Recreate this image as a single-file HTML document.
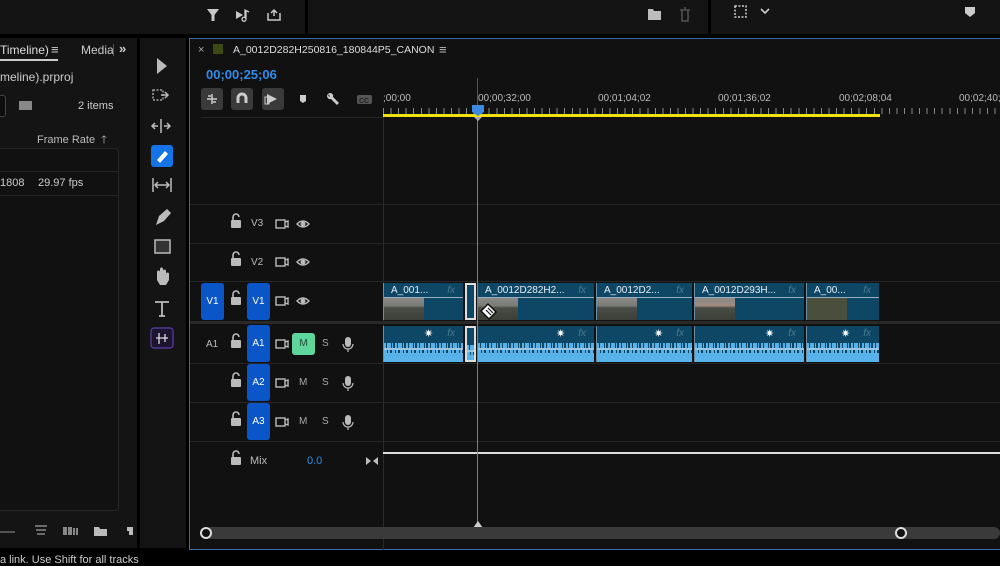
<!DOCTYPE html>
<html><head><meta charset="utf-8"><style>
*{margin:0;padding:0;box-sizing:border-box}
body{width:1000px;height:563px;background:#000;position:relative;overflow:hidden;font-family:"Liberation Sans",sans-serif;color:#c8c8c8;font-size:11px}
.a{position:absolute}
.t{position:absolute;white-space:nowrap}
.hl{position:absolute;height:1px;background:#262626}
.btn{position:absolute;width:22px;height:22px;background:#3a3a3a;border-radius:3px}
.tb{position:absolute;background:#0a55c8;border-radius:3px;color:#fff;font-size:10px;text-align:center}
.vc{position:absolute;top:283px;height:37px;background:#0e4766;border-left:1px solid #6d8fa5}
.vc .ti{position:absolute;left:7px;top:2px;color:#e8eef2;font-size:10px;white-space:nowrap}
.vc .fx{position:absolute;right:8px;top:2px;color:#4d7891;font-style:italic;font-size:10px}
.vc .ln{position:absolute;left:0;right:0;top:14px;height:1px;background:#9ab0bf}
.vc .th{position:absolute;left:0;top:15px;width:40px;height:22px;background:linear-gradient(#8a8a86 0,#7b7c78 35%,#4a4d45 45%,#3b3f37 100%)}
.ac{position:absolute;top:326px;height:36px;background:#0e4766;border-left:1px solid #6d8fa5;overflow:hidden}
.ac .w1{position:absolute;left:0;right:0;top:17px;height:5px;background:repeating-linear-gradient(90deg,#58b2ea 0 2px,#0e4766 2px 3px,#58b2ea 3px 7px,#0e4766 7px 8px,#58b2ea 8px 9px,#0e4766 9px 11px)}
.ac .w0{position:absolute;left:0;right:0;top:22px;height:2px;background:#9cc7e3}
.ac .w2{position:absolute;left:0;right:0;top:24px;height:12px;background:linear-gradient(#58b2ea,#58b2ea) 0 3px/100% 9px no-repeat,repeating-linear-gradient(90deg,#58b2ea 0 3px,#0e4766 3px 4px,#58b2ea 4px 6px,#0e4766 6px 8px)}
.ac .st{position:absolute;top:1px;color:#fff;font-size:11px}
.ac .fx{position:absolute;right:8px;top:2px;color:#4d7891;font-style:italic;font-size:10px}
</style></head><body>
<div class="a" style="left:0;top:0;width:305px;height:34px;background:#141414"></div>
<div class="a" style="left:308px;top:0;width:400px;height:34px;background:#141414"></div>
<div class="a" style="left:711px;top:0;width:289px;height:34px;background:#141414"></div>
<svg class="a" style="left:205px;top:7px" width="90" height="16"><path d="M2 2h12l-4.5 6v6h-3v-6z" fill="#c8c8c8"/><path d="M31 4l7 4-7 4z" fill="#c8c8c8"/><path d="M41 3v9a2 2 0 1 1-1-1.5V3l4 2" stroke="#c8c8c8" stroke-width="1.3" fill="none"/><path d="M63 6v7h12V6M69 9V3m-3 3l3-3 3 3" stroke="#c8c8c8" stroke-width="1.5" fill="none"/></svg>
<svg class="a" style="left:647px;top:6px" width="50" height="16"><path d="M1 3h5l1 2h7v9H1z" fill="#bdbdbd"/><path d="M33 4h10M35 5v10h6V5M37 2h2" stroke="#555" stroke-width="1.5" fill="none"/></svg>
<svg class="a" style="left:733px;top:4px" width="40" height="16"><rect x="2" y="2" width="11" height="11" fill="none" stroke="#ccc" stroke-width="1.5" stroke-dasharray="2 1.5"/><path d="M28 5l4 4 4-4" stroke="#ccc" stroke-width="1.6" fill="none"/></svg>
<svg class="a" style="left:964px;top:6px" width="12" height="12"><path d="M1 1h10v6l-5 4-5-4z" fill="#ccc"/></svg>

<div class="a" style="left:0;top:38px;width:137px;height:510px;background:#141414"></div>
<div class="t" style="left:0;top:43px;font-size:12px;color:#ddd">Timeline)</div>
<div class="a" style="left:0;top:59px;width:58px;height:1.5px;background:#ccc"></div>
<div class="t" style="left:51px;top:42px;font-size:13px;color:#ccc">≡</div>
<div class="t" style="left:81px;top:43px;font-size:12px;color:#ccc">Media</div>
<div class="a" style="left:113px;top:44px;width:1px;height:12px;background:#555"></div>
<div class="t" style="left:119px;top:41px;font-size:13px;color:#ccc;font-weight:bold">»</div>
<div class="t" style="left:0;top:70px;font-size:12px;color:#ccc">meline).prproj</div>
<div class="a" style="left:-6px;top:95px;width:12px;height:22px;border:1px solid #444;border-radius:3px;background:#0e0e0e"></div>
<div class="a" style="left:19px;top:101px;width:13px;height:9px;background:#888"></div>
<div class="t" style="left:78px;top:100px;font-size:11px;color:#ccc">2 items</div>
<div class="t" style="left:37px;top:131px;font-size:11px;color:#bbb">Frame Rate &nbsp;🡑</div>
<div class="a" style="left:0;top:148px;width:119px;height:363px;border:1px solid #262626;border-left:none;border-radius:0 4px 4px 0;background:#111"></div>
<div class="hl" style="left:0;top:171px;width:119px"></div>
<div class="hl" style="left:0;top:195px;width:119px"></div>
<div class="t" style="left:0;top:177px;font-size:11px;color:#ccc">1808</div>
<div class="t" style="left:38px;top:177px;font-size:11px;color:#ccc">29.97 fps</div>
<div class="a" style="left:0;top:531px;width:15px;height:1.5px;background:#555"></div>
<svg class="a" style="left:33px;top:524px" width="105" height="14"><path d="M2 2h12M3 6h10M4 10h8" stroke="#888" stroke-width="1.5"/><path d="M30 3h4v8h-4zM35 3h4v8h-4zM40 4h2v7h-2zM43 4h2v7h-2z" fill="#888"/><path d="M61 3h5l1 2h7v7H61z" fill="#bbb"/><path d="M94 3h6v8h-4v-4h-2z" fill="#bbb"/></svg>

<div class="a" style="left:140px;top:38px;width:46px;height:510px;background:#141414"></div>
<svg class="a" style="left:148px;top:55px" width="30" height="300">
<path d="M9 3l10 8-10 8z" fill="#bbb"/>
<rect x="5" y="35" width="10" height="10" fill="none" stroke="#bbb" stroke-width="1.3" stroke-dasharray="2 1.5"/><path d="M13 40h7m-3-3l3 3-3 3" stroke="#bbb" stroke-width="1.5" fill="none"/>
<path d="M4 71h6m-3-3l-3 3 3 3M22 71h-6m3-3l3 3-3 3M13 64v14" stroke="#bbb" stroke-width="1.5" fill="none"/>
<rect x="3" y="90" width="22" height="22" rx="3" fill="#1473e6"/><path d="M9 105l8-9 3 3-8 9z" fill="#fff"/>
<path d="M5 123v14M23 123v14M7 130h14m-11-3l-3 3 3 3m8-6l3 3-3 3" stroke="#bbb" stroke-width="1.5" fill="none"/>
<path d="M8 170l3-9 8-7 4 4-7 8z" fill="#bbb"/>
<rect x="7" y="185" width="15" height="13" fill="#333" stroke="#bbb" stroke-width="1.5"/>
<path d="M9 225v-8a1.5 1.5 0 0 1 3 0v-3a1.5 1.5 0 0 1 3 0v2a1.5 1.5 0 0 1 3 0v3a1.5 1.5 0 0 1 3 0v6l-3 5h-6z" fill="#bbb"/>
<path d="M7 247h14M14 247v14M11 261h6" stroke="#bbb" stroke-width="1.8"/>
<rect x="3" y="273" width="22" height="20" rx="3" fill="#1d1530" stroke="#5a3fa8" stroke-width="1.2"/><path d="M8 283h12M11 278v11M17 279v8" stroke="#ddd" stroke-width="1.3"/>
</svg>

<div class="a" style="left:189px;top:38px;width:811px;height:512px;background:#111;border:1px solid #3b6aa8;border-right:none"></div>
<div class="t" style="left:198px;top:44px;font-size:11px;color:#aaa">×</div>
<div class="a" style="left:213px;top:44px;width:10px;height:10px;background:#3b4a10"></div>
<div class="t" style="left:233px;top:44px;font-size:10.5px;color:#ddd">A_0012D282H250816_180844P5_CANON</div>
<div class="t" style="left:439px;top:42px;font-size:13px;color:#bbb">≡</div>
<div class="t" style="left:206px;top:67px;font-size:13px;color:#2d8ceb;font-weight:bold">00;00;25;06</div>
<div class="btn" style="left:201px;top:88px"></div><div class="btn" style="left:231px;top:88px"></div><div class="btn" style="left:262px;top:88px"></div>
<svg class="a" style="left:201px;top:88px" width="180" height="22"><path d="M6 11h10M11 6v10M7 8h3M12 14h3" stroke="#ccc" stroke-width="1.5"/><path d="M37 15v-5a4 4 0 0 1 8 0v5" stroke="#ccc" stroke-width="3" fill="none"/><path d="M66 6l10 5-10 5z" fill="#ccc"/><rect x="64" y="9" width="4" height="7" fill="none" stroke="#ccc"/><path d="M99 7h6v6l-3 2-3-2z" fill="#ccc"/><path d="M127 6a3 3 0 0 0 3 5l6 6 2-2-6-6a3 3 0 0 0-5-3l2 2-1 1z" fill="#ccc"/><rect x="156" y="7" width="15" height="9" rx="2" fill="#555"/><text x="158" y="15" font-size="7" fill="#222" font-family="Liberation Sans" font-weight="bold">CC</text></svg>
<div class="hl" style="left:201px;top:117px;width:182px"></div>
<div class="t" style="left:383px;top:93px;font-size:10px;color:#bbb">;00;00</div>
<div class="t" style="left:478px;top:93px;font-size:10px;color:#bbb">00;00;32;00</div>
<div class="t" style="left:598px;top:93px;font-size:10px;color:#bbb">00;01;04;02</div>
<div class="t" style="left:718px;top:93px;font-size:10px;color:#bbb">00;01;36;02</div>
<div class="t" style="left:839px;top:93px;font-size:10px;color:#bbb">00;02;08;04</div>
<div class="t" style="left:959px;top:93px;font-size:10px;color:#bbb">00;02;40;</div>
<div class="a" style="left:383px;top:108px;width:617px;height:6px;background:repeating-linear-gradient(90deg,#888 0 1px,transparent 1px 7.55px)"></div>
<div class="a" style="left:383px;top:114px;width:497px;height:3px;background:#f0e010"></div>
<div class="a" style="left:383px;top:117px;width:1px;height:433px;background:#2a2a2a"></div>
<div class="hl" style="left:190px;top:204px;width:810px"></div>
<div class="hl" style="left:190px;top:243px;width:810px"></div>
<div class="hl" style="left:190px;top:281px;width:810px"></div>
<div class="a" style="left:190px;top:321px;width:810px;height:3px;background:#2a2a2a"></div>
<div class="hl" style="left:190px;top:363px;width:810px"></div>
<div class="hl" style="left:190px;top:402px;width:810px"></div>
<div class="hl" style="left:190px;top:441px;width:810px"></div>
<div class="a" style="left:383px;top:452px;width:617px;height:2px;background:#ddd"></div>
<svg class="a" style="left:228px;top:210px" width="140" height="260">
<g fill="#bbb"><g id="lk"><rect x="3" y="10" width="10" height="8" rx="1"/><path d="M5 10V7a3 3 0 0 1 6 0" stroke="#bbb" stroke-width="1.6" fill="none"/></g>
<use href="#lk" y="38"/><use href="#lk" y="77"/><use href="#lk" y="120"/><use href="#lk" y="159"/><use href="#lk" y="198"/><use href="#lk" y="237"/></g>
<g stroke="#bbb" stroke-width="1.4" fill="none"><g id="cm"><rect x="48" y="10" width="9" height="8"/><path d="M57 12l3-1v6l-3-1"/></g><use href="#cm" y="38"/><use href="#cm" y="77"/><use href="#cm" y="120"/><use href="#cm" y="159"/><use href="#cm" y="198"/></g>
<g stroke="#bbb" stroke-width="1.4" fill="none"><g id="ey"><path d="M69 14q6-6 12 0q-6 6-12 0z"/><circle cx="75" cy="14" r="1.8" fill="#bbb"/></g><use href="#ey" y="38"/><use href="#ey" y="77"/></g>
<g fill="#bbb"><g id="mc"><rect x="117" y="127" width="6" height="10" rx="3"/><path d="M115 134a5 5 0 0 0 10 0M120 139v3" stroke="#bbb" stroke-width="1.2" fill="none"/></g><use href="#mc" y="39"/><use href="#mc" y="78"/></g>
</svg>
<div class="t" style="left:251px;top:218px;font-size:10px;color:#bbb">V3</div>
<div class="t" style="left:251px;top:257px;font-size:10px;color:#bbb">V2</div>
<div class="tb" style="left:201px;top:283px;width:23px;height:37px;line-height:37px">V1</div>
<div class="tb" style="left:247px;top:283px;width:23px;height:37px;line-height:37px">V1</div>
<div class="t" style="left:206px;top:339px;font-size:10px;color:#bbb">A1</div>
<div class="tb" style="left:247px;top:325px;width:23px;height:37px;line-height:37px">A1</div>
<div class="tb" style="left:247px;top:364px;width:23px;height:37px;line-height:37px">A2</div>
<div class="tb" style="left:247px;top:403px;width:23px;height:37px;line-height:37px">A3</div>
<div class="a" style="left:292px;top:333px;width:23px;height:22px;background:#5ed59a;border-radius:3px;color:#1c4a33;font-size:10px;text-align:center;line-height:22px">M</div>
<div class="t" style="left:299px;top:377px;font-size:10px;color:#aaa">M</div><div class="t" style="left:299px;top:416px;font-size:10px;color:#aaa">M</div>
<div class="t" style="left:322px;top:338px;font-size:10px;color:#aaa">S</div><div class="t" style="left:322px;top:377px;font-size:10px;color:#aaa">S</div><div class="t" style="left:322px;top:416px;font-size:10px;color:#aaa">S</div>
<div class="t" style="left:250px;top:455px;font-size:11px;color:#bbb">Mix</div>
<div class="t" style="left:307px;top:455px;font-size:11px;color:#2d8ceb">0.0</div>
<svg class="a" style="left:365px;top:456px" width="14" height="10"><path d="M1 1l5 4-5 4zM13 1L8 5l5 4z" fill="#bbb"/></svg>
<div class="vc" style="left:383px;width:80px"><div class="ti">A_001...</div><div class="fx">fx</div><div class="ln"></div><div class="th"></div></div>
<div class="vc" style="left:465px;width:11px;border:2px solid #ddd"></div>
<div class="vc" style="left:477px;width:117px"><div class="ti">A_0012D282H2...</div><div class="fx">fx</div><div class="ln"></div><div class="th"></div></div>
<div class="vc" style="left:596px;width:96px"><div class="ti">A_0012D2...</div><div class="fx">fx</div><div class="ln"></div><div class="th"></div></div>
<div class="vc" style="left:694px;width:110px"><div class="ti">A_0012D293H...</div><div class="fx">fx</div><div class="ln"></div><div class="th" style="background:linear-gradient(#8a8a86,#a08a80 35%,#4a4d45 45%,#3b3f37)"></div></div>
<div class="vc" style="left:806px;width:73px"><div class="ti">A_00...</div><div class="fx">fx</div><div class="ln"></div><div class="th" style="background:#4a4e3c"></div></div>
<div class="ac" style="left:383px;width:80px"><div class="st" style="left:40px">✷</div><div class="fx">fx</div><div class="w1"></div><div class="w0"></div><div class="w2"></div></div>
<div class="ac" style="left:465px;width:11px;border:2px solid #ddd"><div class="w1"></div><div class="w0"></div><div class="w2"></div></div>
<div class="ac" style="left:477px;width:117px"><div class="st" style="left:78px">✷</div><div class="fx">fx</div><div class="w1"></div><div class="w0"></div><div class="w2"></div></div>
<div class="ac" style="left:596px;width:96px"><div class="st" style="left:57px">✷</div><div class="fx">fx</div><div class="w1"></div><div class="w0"></div><div class="w2"></div></div>
<div class="ac" style="left:694px;width:110px"><div class="st" style="left:70px">✷</div><div class="fx">fx</div><div class="w1"></div><div class="w0"></div><div class="w2"></div></div>
<div class="ac" style="left:806px;width:73px"><div class="st" style="left:34px">✷</div><div class="fx">fx</div><div class="w1"></div><div class="w0"></div><div class="w2"></div></div>
<svg class="a" style="left:479px;top:302px" width="20" height="20"><path d="M2 9l7-7 8 8-7 7z" fill="#fff" stroke="#111" stroke-width="1.5"/><path d="M7 8l5 5M9 6l5 5" stroke="#111" stroke-width="1.2"/></svg>
<div class="a" style="left:477px;top:117px;width:1px;height:406px;background:#3d8ae0"></div>
<div class="a" style="left:477px;top:78px;width:1px;height:30px;background:#555"></div>
<svg class="a" style="left:471px;top:104px" width="14" height="18"><path d="M1 1h12v7l-6 4-6-4z" fill="#3d8ae0"/><path d="M3 13h8l-4 4z" fill="#aaa"/></svg>
<svg class="a" style="left:472px;top:520px" width="12" height="8"><path d="M6 1l5 7H1z" fill="#ccc"/></svg>
<div class="a" style="left:205px;top:527px;width:795px;height:12px;background:#3a3a3a;border-radius:6px"></div>
<div class="a" style="left:200px;top:527px;width:12px;height:12px;border-radius:50%;background:#111;border:2px solid #ddd"></div>
<div class="a" style="left:895px;top:527px;width:12px;height:12px;border-radius:50%;background:#111;border:2px solid #ddd"></div>
<div class="t" style="left:0;top:554px;font-size:11px;color:#ccc">a link. Use Shift for all tracks</div>
</body></html>
